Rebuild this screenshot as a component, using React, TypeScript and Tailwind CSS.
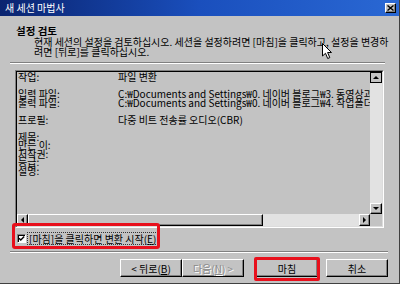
import React from "react";

const rows: [string, string][] = [
  ["작업:", "파일 변환"],
  ["", ""],
  ["입력 파일:", "C:₩Documents and Settings₩0. 네이버 블로그₩3. 동영상과 음악₩sample.wmv"],
  ["출력 파일:", "C:₩Documents and Settings₩0. 네이버 블로그₩4. 작업폴더₩sample.wma"],
  ["", ""],
  ["프로필:", "다중 비트 전송률 오디오(CBR)"],
  ["", ""],
  ["제목:", ""],
  ["만든 이:", ""],
  ["저작권:", ""],
  ["등급:", ""],
  ["설명:", ""],
];

// classic raised 3d box
const raised =
  "border border-t-white border-l-white border-r-black border-b-black shadow-[inset_-1px_-1px_0_#808080]";

const Arrow = ({ dir }: { dir: "up" | "down" | "left" | "right" }) => {
  const pts = {
    up: "1,5 4,2 7,5",
    down: "1,2 4,5 7,2",
    left: "5,1 2,4 5,7",
    right: "2,1 5,4 2,7",
  }[dir];
  return (
    <svg width="8" height="8" viewBox="0 0 8 8">
      <polygon points={pts} fill="#000" />
    </svg>
  );
};

const Button = ({
  children,
  disabled,
  className = "",
}: {
  children: React.ReactNode;
  disabled?: boolean;
  className?: string;
}) => (
  <div
    className={`w-[62px] h-[18px] flex items-center justify-center bg-[#c3c3c3] text-[10px] ${raised} ${
      disabled ? "text-[#8a8a8a] [text-shadow:1px_1px_0_#fff]" : "text-black"
    } ${className}`}
  >
    {children}
  </div>
);

export default function App() {
  return (
    <div className="relative w-[400px] h-[284px] overflow-hidden bg-[#c3c3c3] border-r border-b border-r-[#404040] border-b-[#404040] font-['Noto_Sans_CJK_KR','Liberation_Sans',sans-serif] text-black flex flex-col">
      {/* title bar */}
      <div className="h-[16px] flex items-center justify-between pl-[5px] pr-[3px] bg-gradient-to-r from-[#0a2470] via-[#1a4fbd] to-[#2a68d4]">
        <span className="text-white text-[10px] leading-[12px]">새 세션 마법사</span>
        <div className={`w-[11px] h-[10px] flex items-center justify-center bg-[#c3c3c3] ${raised}`}>
          <svg width="7" height="6" viewBox="0 0 7 6">
            <path d="M0.5 0.5 L6.5 5.5 M6.5 0.5 L0.5 5.5" stroke="#000" strokeWidth="1.4" />
          </svg>
        </div>
      </div>

      {/* header */}
      <div className="mt-[10px] pl-[16px] text-[10.5px] leading-[10px] font-bold">설정 검토</div>
      <div className="mt-[1px] pl-[34px] text-[10px] leading-[9.5px] whitespace-nowrap">
        <div>현재 세션의 설정을 검토하십시오. 세션을 설정하려면 [마침]을 클릭하고, 설정을 변경하</div>
        <div>려면 [뒤로]를 클릭하십시오.</div>
      </div>

      <div className="mt-[6px] ml-[10px] mr-[14px] border-t border-b border-t-[#808080] border-b-white" />

      {/* list box */}
      <div className="mt-[6px] mx-[15px] h-[158px] border border-t-[#808080] border-l-[#808080] border-r-white border-b-white">
        <div className="h-full border border-t-black border-l-black border-r-[#dcdcdc] border-b-[#dcdcdc] flex flex-col bg-[#c3c3c3]">
          <div className="flex-1 flex min-h-0">
            <div className="flex-1 overflow-hidden pt-[1px] pl-[1px] text-[10px]">
              {rows.map(([k, v], i) => (
                <div key={i} className="h-[8.55px] leading-[8.55px] flex whitespace-nowrap">
                  <span className="w-[100px] shrink-0">{k}</span>
                  <span>{v}</span>
                </div>
              ))}
            </div>
            {/* vertical scrollbar */}
            <div className="w-[12px] flex flex-col bg-[#e2e2e2]">
              <div className="h-[11px] flex items-center justify-center bg-[#c3c3c3] border border-black">
                <Arrow dir="up" />
              </div>
              <div className="flex-1" />
              <div className={`h-[11px] flex items-center justify-center bg-[#c3c3c3] ${raised}`}>
                <Arrow dir="down" />
              </div>
            </div>
          </div>
          {/* horizontal scrollbar */}
          <div className="h-[12px] flex">
            <div className={`w-[11px] flex items-center justify-center bg-[#c3c3c3] ${raised}`}>
              <Arrow dir="left" />
            </div>
            <div className={`w-[235px] bg-[#c3c3c3] ${raised}`} />
            <div className="flex-1 bg-[#e2e2e2]" />
            <div className={`w-[11px] flex items-center justify-center bg-[#c3c3c3] ${raised}`}>
              <Arrow dir="right" />
            </div>
            <div className="w-[12px] bg-[#c3c3c3]" />
          </div>
        </div>
      </div>

      {/* checkbox */}
      <div className="mt-[4px] pl-[17px] h-[12px] flex items-center gap-[2px]">
        <div className="w-[9px] h-[9px] bg-white border border-t-[#808080] border-l-[#808080] border-r-white border-b-white shadow-[inset_1px_1px_0_#000] flex items-center justify-center">
          <svg width="7" height="7" viewBox="0 0 7 7">
            <path d="M1 3.2 L2.8 5 L6.2 1.4" stroke="#000" strokeWidth="1.4" fill="none" />
          </svg>
        </div>
        <span className="text-[10px] leading-[11px] px-[1px] outline outline-1 outline-dotted outline-[#333]">
          [마침]을 클릭하면 변환 시작(<span className="underline">E</span>)
        </span>
      </div>

      <div className="mt-[7px] ml-[10px] mr-[11px] border-t border-b border-t-[#808080] border-b-white" />

      {/* buttons */}
      <div className="mt-[6px] pr-[11px] flex justify-end">
        <Button>
          &lt; 뒤로(<span className="underline">B</span>)
        </Button>
        <Button disabled>
          다음(<span className="underline">N</span>) &gt;
        </Button>
        <Button className="ml-[12px]">마침</Button>
        <Button className="ml-[8px]">취소</Button>
      </div>

      {/* red annotations */}
      <div className="absolute left-[12px] top-[223px] w-[148px] h-[26px] border-[3px] border-[#e8101c] rounded-[3px]" />
      <div className="absolute left-[254px] top-[257px] w-[66px] h-[24px] border-[3px] border-[#e8101c] rounded-[2px]" />

      {/* mouse pointer */}
      <svg className="absolute left-[322px] top-[43px]" width="11" height="17" viewBox="0 0 11 17">
        <path d="M0.5 0.5 L0.5 13 L3.5 10.3 L5.7 15.5 L7.8 14.6 L5.6 9.5 L9.5 9.5 Z" fill="#fff" stroke="#000" strokeWidth="1" />
      </svg>
    </div>
  );
}
